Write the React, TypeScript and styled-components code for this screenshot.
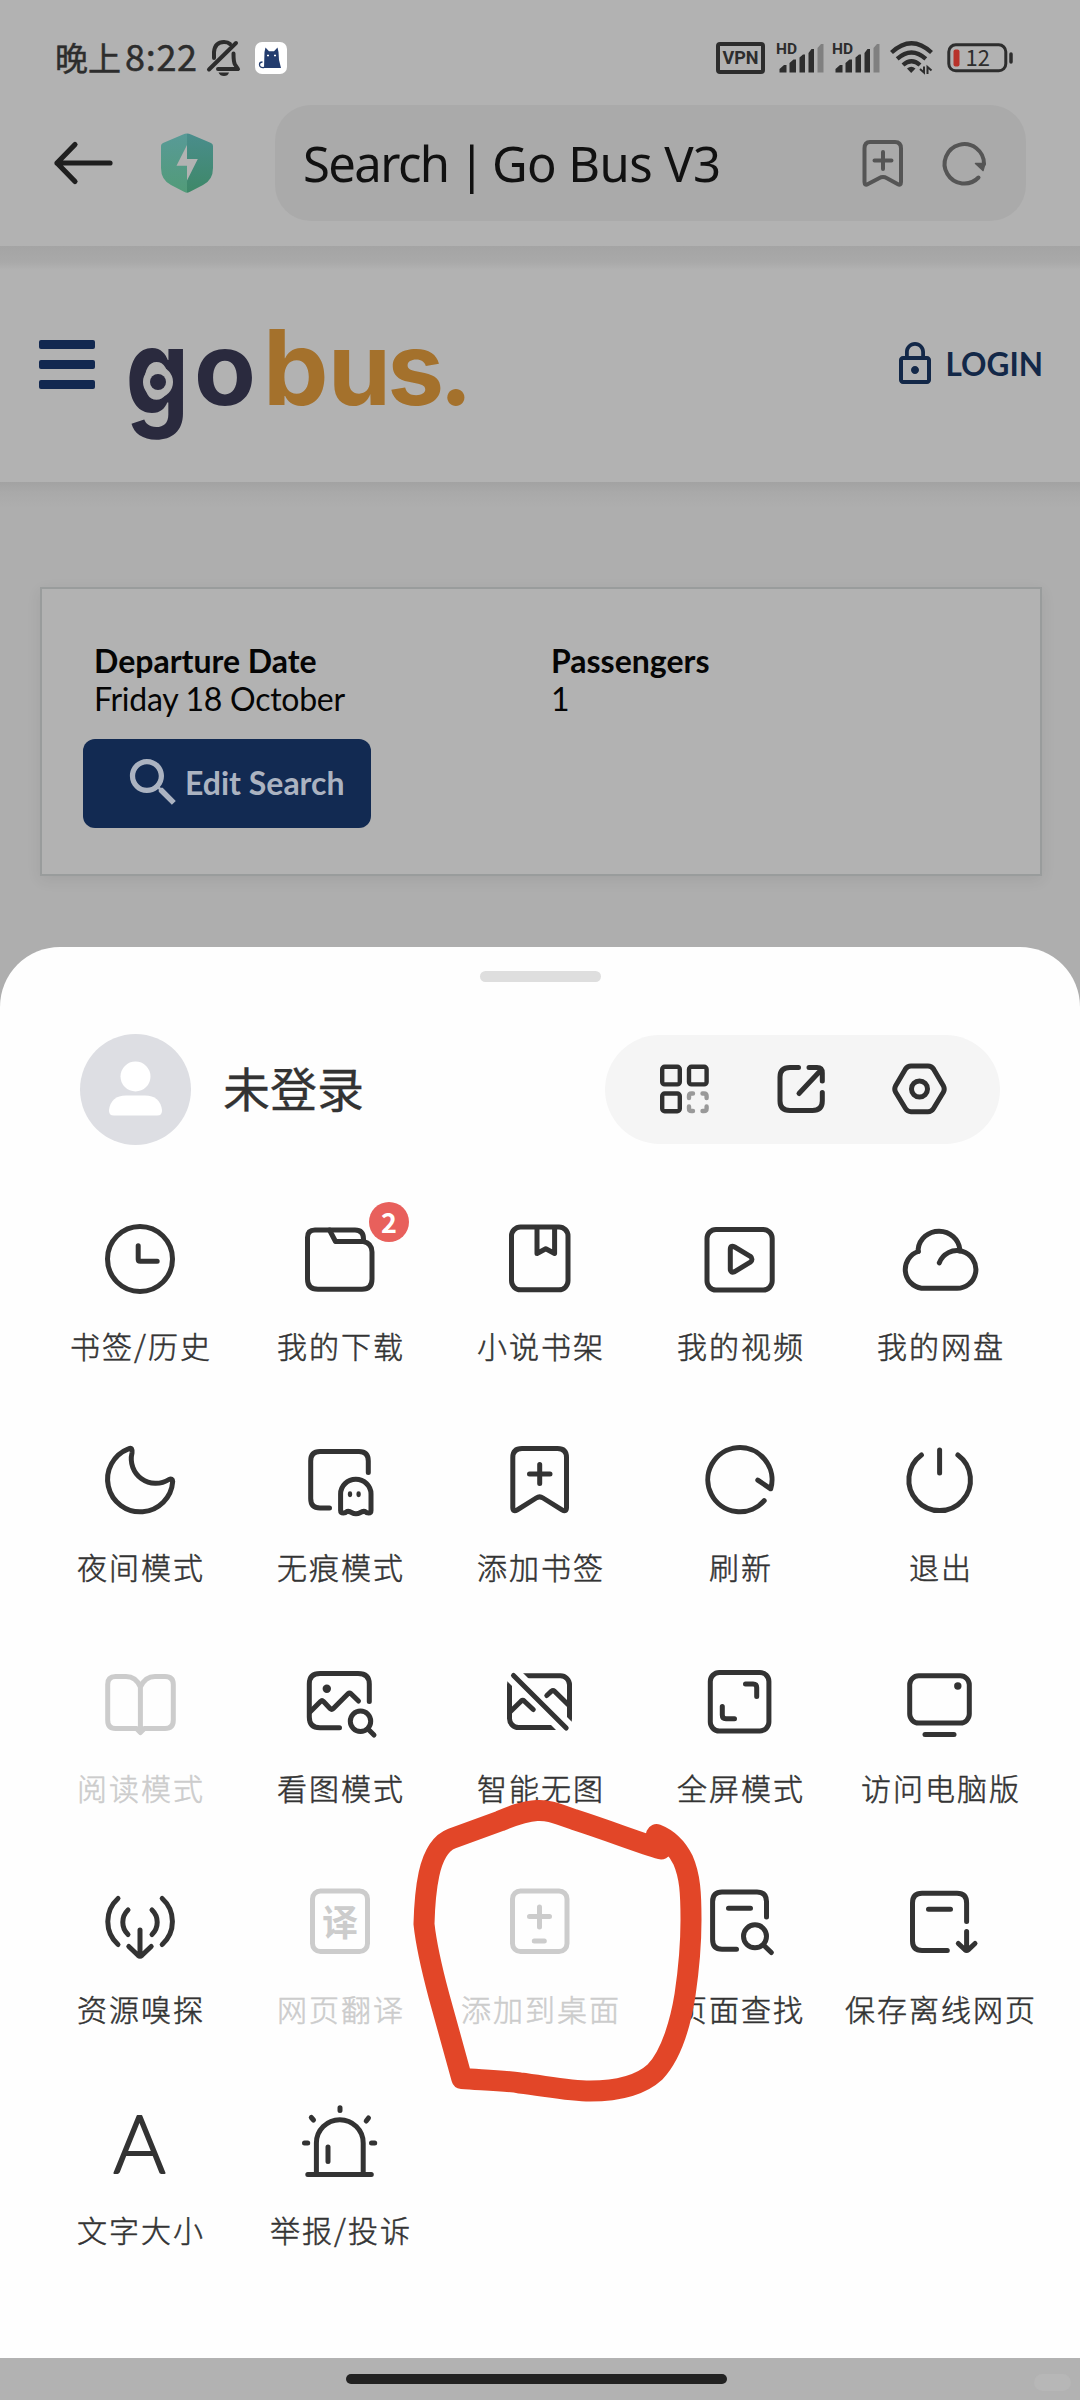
import React from "react";
import styled, { createGlobalStyle } from "styled-components";

const cjk = `"Noto Sans CJK SC", "Noto Sans", sans-serif`;
const ink = "#333333";
const muted = "#cccccc";
const dim = "#b2b2b2";

const GlobalStyle = createGlobalStyle`
  * { box-sizing: border-box; }
  body { margin: 0; background: #aeaeae; }
`;

const Screen = styled.div`
  width: 1080px;
  height: 2400px;
  display: flex;
  flex-direction: column;
  background: #aeaeae;
  font-family: ${cjk};
  overflow: hidden;
`;

/* ---------- status bar ---------- */

const StatusBar = styled.header`
  height: 105px;
  flex: none;
  display: flex;
  align-items: center;
  justify-content: space-between;
  padding: 10px 66px 0 55px;
  background: ${dim};
  color: #2d2d2d;
`;

const StatusGroup = styled.div`
  display: flex;
  align-items: center;
`;

const Clock = styled.div`
  display: flex;
  align-items: baseline;
  margin-bottom: 4px;
  font-size: 33px;
  line-height: 40px;
  font-weight: 400;
  -webkit-text-stroke: 0.5px #2d2d2d;
`;

const ClockDigits = styled.span`
  font-size: 36px;
  margin-left: 4px;
  letter-spacing: 0.7px;
`;

const Glyph = styled.svg<{ $ml?: number; $mt?: number }>`
  display: block;
  flex: none;
  overflow: visible;
  margin-left: ${(p) => p.$ml ?? 0}px;
  margin-top: ${(p) => p.$mt ?? 0}px;
`;

const VpnTag = styled.div`
  width: 49px;
  height: 32px;
  display: flex;
  align-items: center;
  justify-content: center;
  border: 4px solid #2d2d2d;
  border-radius: 4px;
  font: 700 18px/24px Roboto, sans-serif;
`;

/* ---------- browser toolbar ---------- */

const Toolbar = styled.div`
  height: 141px;
  flex: none;
  display: flex;
  align-items: flex-start;
  padding: 0 54px 0 54px;
  background: ${dim};
`;

const ToolSlot = styled.div<{ $w: number; $ml?: number }>`
  width: ${(p) => p.$w}px;
  height: 116px;
  margin-left: ${(p) => p.$ml ?? 0}px;
  display: flex;
  align-items: center;
`;

const AddressBox = styled.div`
  flex: 1;
  height: 116px;
  margin-left: 62px;
  display: flex;
  align-items: center;
  padding: 0 39px 0 28px;
  border-radius: 36px;
  background: #aaaaaa;
`;

const AddressText = styled.div`
  flex: 1;
  white-space: nowrap;
  color: #111111;
  font-family: "Noto Sans", sans-serif;
  font-size: 49px;
  line-height: 60px;
  letter-spacing: -0.6px;
`;

const TightText = styled.span<{ $ls: number }>`
  letter-spacing: ${(p) => p.$ls}px;
`;

/* ---------- web page ---------- */

const SiteHeader = styled.div`
  height: 236px;
  flex: none;
  display: flex;
  align-items: center;
  padding: 0 37px 0 39px;
  background: linear-gradient(#a4a4a4, #a9a9a9 16px, ${dim} 24px);
`;

const Burger = styled.div`
  width: 56px;
  display: flex;
  flex-direction: column;
  gap: 11px;
`;

const BurgerBar = styled.span`
  height: 9px;
  border-radius: 2px;
  background: #122850;
`;

const Login = styled.div`
  margin-left: auto;
  display: flex;
  align-items: center;
  gap: 7px;
  color: #132848;
  font: 700 31.5px/40px Lato, sans-serif;
`;

const PageBody = styled.main`
  height: 465px;
  flex: none;
  padding: 105px 38px 0 40px;
  background: linear-gradient(#a2a2a2, #a9a9a9 10px, #aeaeae 26px);
`;

const TripCard = styled.section`
  height: 289px;
  display: flex;
  flex-direction: column;
  align-items: flex-start;
  padding: 53px 0 0 41px;
  border: 2px solid #999c9c;
  background: ${dim};
  box-shadow: 0 4px 14px rgba(0, 0, 0, 0.07);
  color: #050505;
  font: 400 32px/38.4px Lato, sans-serif;
`;

const TripFacts = styled.div`
  display: grid;
  grid-template-columns: 457px 300px;
  padding-left: 11px;
`;

const FactName = styled.div`
  font-weight: 700;
`;

const FactValue = styled.div`
  letter-spacing: -0.27px;
`;

const EditButton = styled.button`
  width: 288px;
  height: 89px;
  margin: 20px 0 0 0;
  padding: 0 0 0 39px;
  display: flex;
  align-items: center;
  border: 0;
  border-radius: 12px;
  background: #122a52;
  color: #abb3c1;
  font: 700 32px/40px Lato, sans-serif;
  white-space: nowrap;
`;

/* ---------- bottom sheet ---------- */

const Sheet = styled.section`
  position: relative;
  height: 1411px;
  flex: none;
  display: flex;
  flex-direction: column;
  border-radius: 60px 60px 0 0;
  background: #fefefe;
`;

const Handle = styled.div`
  width: 121px;
  height: 11px;
  margin: 24px auto 0 480px;
  border-radius: 6px;
  background: #dedede;
`;

const ProfileRow = styled.div`
  height: 110px;
  margin-top: 52px;
  padding: 0 80px;
  display: flex;
  align-items: center;
`;

const UserName = styled.div`
  margin: 0 auto 4px 32px;
  color: ${ink};
  font-size: 47px;
  line-height: 60px;
  -webkit-text-stroke: 0.3px ${ink};
`;

const QuickPill = styled.div`
  width: 395px;
  height: 109px;
  padding: 0 54px 0 53px;
  display: flex;
  align-items: center;
  justify-content: space-between;
  border-radius: 55px;
  background: #f5f5f5;
`;

const MenuGrid = styled.div`
  margin: 67px 40px 0;
  display: grid;
  grid-template-columns: repeat(5, 200px);
  grid-auto-rows: 221px;
`;

const MenuCell = styled.div<{ $off?: boolean }>`
  position: relative;
  display: flex;
  flex-direction: column;
  align-items: center;
  color: ${(p) => (p.$off ? muted : ink)};
`;

const MenuIcon = styled.svg`
  display: block;
  width: 96px;
  height: 96px;
  flex: none;
  overflow: visible;
  fill: none;
  stroke: currentColor;
  stroke-width: 5;
  stroke-linecap: round;
  stroke-linejoin: round;
`;

const MenuLabel = styled.div`
  margin-top: 18px;
  white-space: nowrap;
  font-weight: 300;
  font-size: 30px;
  line-height: 40px;
  letter-spacing: 2px;
  margin-right: -2px;
  -webkit-text-stroke: 0.5px currentColor;
`;

const Badge = styled.span`
  position: absolute;
  left: 129px;
  top: -9px;
  width: 40px;
  height: 40px;
  border-radius: 50%;
  background: #e8605c;
  color: #ffffff;
  text-align: center;
  font: 700 27px/40px "Noto Sans CJK SC", sans-serif;
`;

const Scribble = styled.svg`
  position: absolute;
  left: 0;
  top: 0;
  pointer-events: none;
`;

const NavBar = styled.footer`
  height: 42px;
  flex: none;
  display: flex;
  align-items: flex-start;
  padding: 16px 9px 0 346px;
  background: ${dim};
`;

const NavPill = styled.div`
  width: 381px;
  height: 10px;
  border-radius: 5px;
  background: #222222;
`;

const Stamp = styled.div`
  width: 37px;
  height: 17px;
  margin-left: auto;
  border-radius: 9px;
  background: #b7b7b7;
`;

/* ---------- drawings ---------- */

const SignalIcon = ({ ml }: { ml: number }) => (
  <Glyph width="46" height="32" viewBox="0 0 46 32" $ml={ml} fill="#2d2d2d">
    <text x="-1" y="12" fontFamily="Roboto, sans-serif" fontWeight="700" fontSize="15.5">HD</text>
    <path d="M2.5 30.5V27l4.5-4h2.5v7.5zM12.500 30.5V21l4-3.500h2.500v13zM22.500 30.500V15.500l3.500-3h2v18zM31.500 30.500V11l3-4h2.500v23.500z" />
    <path fill="#808080" d="M40.500 30.500V6l3.500-4h2.500v28.500z" />
  </Glyph>
);

const icons: Record<string, React.ReactNode> = {
  history: (
    <>
      <circle cx="0" cy="0" r="32.500" />
      <path d="M-1.800-13.200V.3Q-1.800 2.300.2 2.300H17.200" />
    </>
  ),
  download: (
    <>
      <path d="M-25-29H15Q23.500-29 23.500-20V-17.500Q32-15.500 32-7V20Q32 30.300 22 30.300H-22Q-32.500 30.300-32.500 20V-21.500Q-32.500-29-25-29Z" />
      <path d="M23.500-17.500H-4.500L-10.500-29" />
    </>
  ),
  novel: (
    <>
      <rect x="-28.500" y="-32" width="56.500" height="62.800" rx="9" />
      <path d="M-3-31V-5.500L5.800-10.300L14.600-5.500V-31" />
    </>
  ),
  video: (
    <>
      <rect x="-33" y="-29.500" width="65.200" height="60.500" rx="9" />
      <path d="M-9.700-9.500Q-9.700-14.500-5.300-12L10.300-2.700Q13.600 0 10.300 3.200L-5.300 12.600Q-9.700 14.500-9.700 10Z" />
    </>
  ),
  cloud: (
    <g transform="translate(-1 0)">
      <path d="M.3 3.800A18.900 18.900 0 1 1 16.500 29.300H-17.500A19 19 0 0 1-20.800-7.500" />
      <path d="M-20.800-7.500V-10A20.900 20 0 0 1 20.800-9.500V-8" />
    </g>
  ),
  night: (
    <path d="M-11.500-31.200A32.600 32.600 0 1 0 32.700 1.500C32.700-.8 31.300-1.400 29-.5A24.500 24.500 0 0 1-8-27C-7.700-31-8.200-32.600-11.500-31.200Z" />
  ),
  incognito: (
    <>
      <path d="M28.300-7.500V-19Q28.300-28.500 19-28.500H-20Q-29.300-28.500-29.300-19V18.500Q-29.300 28-20 28H-10.500" />
      <path d="M.6 14A15.200 14.700 0 0 1 31 14V30.500Q31 33 28.500 33Q26.500 33 25 31.500Q22.500 31 20.500 32.500Q16 35 11.500 32.500Q9.500 31 7 31.500Q5.500 33 3.500 33Q.6 33 .6 30.500Z" />
      <path strokeWidth="4.300" d="M10 13.500V15M18.600 13.500V15" />
    </>
  ),
  addMark: (
    <>
      <path d="M-18-31.500H17.500Q26.500-31.500 26.500-22.500V27.500Q26.500 32.500 22 29.800L3 18Q-.4 15.800-3.800 18L-22.700 29.800Q-27.200 32.500-27.200 27.500V-22.500Q-27.200-31.500-18-31.500Z" />
      <path d="M-10.500-6H10M-.3-15.500V3.500" />
    </>
  ),
  refresh: <path d="M24.200 20.700A32.100 32.100 0 1 1 30.700 8.800L17.800.2" />,
  power: (
    <>
      <path d="M-18.600-25A30.800 30.800 0 1 0 17.900-25" />
      <path d="M-.4-30V-7" />
    </>
  ),
  read: (
    <path d="M.4-14C-3-22-8-24.500-14-24.500H-24.500Q-32.300-24.500-32.300-16.500V19Q-32.300 27.500-24.500 27.500H-3.500L.4 31.500L4.300 27.500H25Q33.300 27.500 33.300 19V-16.500Q33.300-24.500 25-24.500H15C9-24.500 4-22 .4-14ZV30" />
  ),
  imageSearch: (
    <>
      <path d="M29.300 .5V-17Q29.300-27.500 18-27.500H-20Q-30.700-27.500-30.700-17V16Q-30.700 26.800-20 26.800H-.5" />
      <path d="M-29.500 10.500L-19.500.5Q-18-1-16.500.5L-9.700 7.700Q-8.300 9-6.900 7.700L8-7.300Q9.500-8.500 11-7.300L18.500 0" />
      <circle cx="-13.200" cy="-12.300" r="4.200" fill="currentColor" stroke="none" />
      <circle cx="20.500" cy="20.300" r="10.200" />
      <path d="M28 28L34 34" />
    </>
  ),
  noImage: (
    <>
      <mask id="slashGap" maskUnits="userSpaceOnUse" x="-48" y="-48" width="96" height="96">
        <rect x="-48" y="-48" width="96" height="96" fill="#fff" stroke="none" />
        <path d="M-45-44L45 46" stroke="#000" strokeWidth="17" />
      </mask>
      <rect x="-30.500" y="-25.200" width="60" height="51.700" rx="9" mask="url(#slashGap)" />
      <path d="M-29.500 10.500L-19 .2Q-17.300-1.300-15.600.2L-6.800 8.500" />
      <path d="M6.800-5.500L11.500-9.800Q13-11 14.500-9.800L28 3.500" />
      <path d="M-26.500-25.500L26.200 27" />
    </>
  ),
  full: (
    <>
      <rect x="-29.700" y="-28.500" width="58.600" height="58.500" rx="9" />
      <path d="M5.500-17H13Q16.700-17 16.700-13.500V-4.500M-17.700 5.500V14Q-17.700 17.700-14 17.700H-5.500" />
    </>
  ),
  desktop: (
    <>
      <rect x="-30.300" y="-25.200" width="59.600" height="47.300" rx="9" />
      <path d="M-15 33.600H14" />
      <circle cx="17.800" cy="-15" r="3.700" fill="currentColor" stroke="none" />
    </>
  ),
  sniff: (
    <>
      <path d="M-22-23.500A31 31 0 0 0-22 22.500M22.200-23.500A31 31 0 0 1 22.200 22.500" />
      <path d="M-12-12A17 17 0 0 0-12 12.500M12-12A17 17 0 0 1 12 12.500" />
      <path d="M0 8V33M-11.200 24.500L-2 33.300Q0 35 2 33.300L11.200 24.500" />
    </>
  ),
  translate: (
    <>
      <rect x="-27.500" y="-31" width="55" height="60.500" rx="8" />
      <text x="0" y="13.500" textAnchor="middle" fill="currentColor" stroke="none" fontFamily={cjk} fontWeight="700" fontSize="36">译</text>
    </>
  ),
  addDesk: (
    <>
      <rect x="-27.500" y="-31" width="54.500" height="60.500" rx="8" />
      <path d="M-10.500-5.500H9.500M-.5-15V5M-5.700 19H4.300" />
    </>
  ),
  find: (
    <>
      <path d="M26.500-5V-20.500Q26.500-30 17-30H-18Q-27.400-30-27.400-20.500V17.500Q-27.400 27.300-18 27.300H-3.500" />
      <path d="M-11.500-13.700H10.500M23.500 23L31.300 30.500" />
      <circle cx="15" cy="14.300" r="11.500" />
    </>
  ),
  save: (
    <>
      <path d="M26.600-.5V-19Q26.600-28.700 17-28.700H-18Q-27.500-28.700-27.500-19V19Q-27.500 28.500-18 28.500H7.300" />
      <path d="M-11.500-12.700H10.500M26.600 9.500V28M18.300 21.500L25 27.800Q26.600 29.200 28.200 27.800L35 21.500" />
    </>
  ),
  fontSize: (
    <text x="-.5" y="30" textAnchor="middle" fill="currentColor" strokeWidth="1.800" fontFamily="Lato, sans-serif" fontWeight="300" fontSize="80">A</text>
  ),
  report: (
    <>
      <path d="M-23.600 31V0A23.400 23.200 0 0 1 23.200 0V31" />
      <path d="M-32.200 31.400H31.300M-12 4V18.500" />
      <path d="M0-35.300V-32.500M-35.500 0H-32.300M31.500 0H34.700M-28.700-25.500L-26.500-23M28.500-25L26.200-22" />
    </>
  ),
};

type Item = { icon: string; label: string; off?: boolean; badge?: string };

const items: Item[] = [
  { icon: "history", label: "书签/历史" },
  { icon: "download", label: "我的下载", badge: "2" },
  { icon: "novel", label: "小说书架" },
  { icon: "video", label: "我的视频" },
  { icon: "cloud", label: "我的网盘" },
  { icon: "night", label: "夜间模式" },
  { icon: "incognito", label: "无痕模式" },
  { icon: "addMark", label: "添加书签" },
  { icon: "refresh", label: "刷新" },
  { icon: "power", label: "退出" },
  { icon: "read", label: "阅读模式", off: true },
  { icon: "imageSearch", label: "看图模式" },
  { icon: "noImage", label: "智能无图" },
  { icon: "full", label: "全屏模式" },
  { icon: "desktop", label: "访问电脑版" },
  { icon: "sniff", label: "资源嗅探" },
  { icon: "translate", label: "网页翻译", off: true },
  { icon: "addDesk", label: "添加到桌面", off: true },
  { icon: "find", label: "页面查找" },
  { icon: "save", label: "保存离线网页" },
  { icon: "fontSize", label: "文字大小" },
  { icon: "report", label: "举报/投诉" },
];

export default function App() {
  return (
    <>
      <GlobalStyle />
      <Screen>
        <StatusBar>
          <StatusGroup>
            <Clock>
              晚上<ClockDigits>8:22</ClockDigits>
            </Clock>
            <Glyph width="34" height="36" viewBox="0 0 34 36" $ml={9} fill="none" stroke="#2d2d2d" strokeWidth="4" strokeLinecap="round" strokeLinejoin="round">
              <path d="M7 18V12Q8 2 17 2Q21 2 23 4M26.500 13.500Q26.500 22 28 24.500L31 29H11" />
              <path d="M2 29.500L29 3" />
              <path d="M11.500 32.500H22Q21 36 17 36T11.500 32.500Z" fill="#2d2d2d" stroke="none" />
            </Glyph>
            <Glyph width="32" height="32" viewBox="0 0 32 32" $ml={14}>
              <rect width="32" height="32" rx="7" fill="#fff" />
              <path fill="#233c6e" d="M9.500 10L10.500 5.500L14 9.200H19L22.500 5.500L23.500 10L24 18L26 26H9Z" />
              <path d="M9 25.500Q4.500 26 4.500 22.500Q4.500 20 7.500 20" fill="none" stroke="#233c6e" strokeWidth="1.300" />
              <path d="M12 13.500h2M19 13.500h2" stroke="#fff" strokeWidth="1.500" />
            </Glyph>
          </StatusGroup>
          <StatusGroup>
            <VpnTag>VPN</VpnTag>
            <SignalIcon ml={12} />
            <SignalIcon ml={10} />
            <Glyph width="43" height="34" viewBox="0 0 43 34" $ml={11} fill="none" stroke="#2d2d2d" strokeWidth="4.300" strokeLinecap="butt">
              <path d="M1.500 11.500Q21.500-7 41.500 11.500M7.200 17.800Q21.500 5 35.800 17.800M13 24Q21.500 16.500 30 24" />
              <path d="M17 27.500Q21.200 24 25.500 27.500L21.200 32Z" fill="#2d2d2d" stroke="none" />
              <path strokeWidth="2" d="M30 28L34 31.500V25.500M41.500 29.500L37.500 26V33" />
            </Glyph>
            <Glyph width="67" height="30" viewBox="0 0 67 30" $ml={14}>
              <rect x="1.800" y="1.800" width="57" height="26" rx="7" fill="none" stroke="#2d2d2d" strokeWidth="3" />
              <rect x="6.500" y="6.500" width="6" height="17" rx="2" fill="#b8322a" />
              <path d="M64 11v8" stroke="#2d2d2d" strokeWidth="3.500" strokeLinecap="round" />
              <text x="18.500" y="23" fontFamily={cjk} fontSize="22" fill="#2d2d2d">12</text>
            </Glyph>
          </StatusGroup>
        </StatusBar>

        <Toolbar>
          <ToolSlot $w={59}>
            <Glyph width="59" height="42" viewBox="0 0 59 42" fill="none" stroke="#1f1f1f" strokeWidth="5.200" strokeLinecap="round" strokeLinejoin="round">
              <path d="M21 2.500L3 21L21 39.500M3 21H56" />
            </Glyph>
          </ToolSlot>
          <ToolSlot $w={52} $ml={48}>
            <Glyph width="52" height="60" viewBox="0 0 52 60">
              <defs>
                <linearGradient id="shieldL" x1="0" y1="0" x2="0" y2="1">
                  <stop offset="0" stopColor="#589a97" />
                  <stop offset="1" stopColor="#529b78" />
                </linearGradient>
                <linearGradient id="shieldR" x1="0" y1="0" x2="0" y2="1">
                  <stop offset="0" stopColor="#4a8d8c" />
                  <stop offset="1" stopColor="#3e8868" />
                </linearGradient>
              </defs>
              <path fill="url(#shieldL)" d="M26 .5Q24 .5 22 1.500L2 10Q0 11 0 13V35Q0 47 10 52L23 58.800Q25 59.800 26 59.800Z" />
              <path fill="url(#shieldR)" d="M26 .5Q28 .5 30 1.500L50 10Q52 11 52 13V35Q52 47 42 52L29 58.800Q27 59.800 26 59.800Z" />
              <path fill={dim} d="M26 12L15.500 32.800H26V47.500L36.800 26H26Z" />
            </Glyph>
          </ToolSlot>
          <AddressBox>
            <AddressText>
              <TightText $ls={-1.6}>Search</TightText>
              <TightText $ls={-3}> | </TightText>
              Go Bus V3
            </AddressText>
            <Glyph width="42" height="48" viewBox="0 0 42 48" fill="none" stroke="#555555" strokeWidth="4" strokeLinecap="round" strokeLinejoin="round">
              <path d="M8 3H33Q39 3 39 9.500V43Q39 47 35.500 45L25 39.200Q21 37 17 39.200L6 45Q2.500 47 2.500 43V9.500Q2.500 3 8 3Z" />
              <path d="M12.500 21.500H29.500M21 13V30" />
            </Glyph>
            <Glyph width="44" height="44" viewBox="0 0 44 44" $ml={39} fill="none" stroke="#555555" strokeWidth="4" strokeLinecap="round" strokeLinejoin="round">
              <path d="M35.500 36.500A19.700 19.700 0 1 1 41 23" />
              <path d="M32.500 22.500H42L40 29.500Z" fill="#555555" strokeWidth="1.500" />
            </Glyph>
          </AddressBox>
        </Toolbar>

        <SiteHeader>
          <Burger>
            <BurgerBar />
            <BurgerBar />
            <BurgerBar />
          </Burger>
          <Glyph width="340" height="200" viewBox="128 264 340 200" $ml={33} fontFamily="Inter, sans-serif" fontWeight="700" fontSize="101">
            <text transform="translate(0 349.500) scale(1 1.180)" y="55" x="125.500" fill="#2a2a3e">g</text>
            <ellipse cx="158" cy="382" rx="15" ry="15.500" fill={dim} />
            <circle cx="158" cy="382" r="8" fill="#2a2a3e" />
            <text y="404.500" x="194" fill="#2a2a3e">o</text>
            <text y="404.500" x="263" fontSize="104" fill="#a4712c">b</text>
            <text y="404.500" x="328 387.500 439" fill="#a4712c">us.</text>
          </Glyph>
          <Login>
            <Glyph width="48" height="48" viewBox="0 0 24 24" fill="#132848">
              <path d="M12 17c1.100 0 2-.9 2-2s-.9-2-2-2-2 .9-2 2 .9 2 2 2zm6-9h-1V6c0-2.760-2.240-5-5-5S7 3.240 7 6v2H6c-1.100 0-2 .9-2 2v10c0 1.100.9 2 2 2h12c1.100 0 2-.9 2-2V10c0-1.100-.9-2-2-2zM8.900 6c0-1.710 1.390-3.100 3.100-3.100s3.100 1.390 3.100 3.100v2H8.900V6zM18 20H6V10h12v10z" />
            </Glyph>
            LOGIN
          </Login>
        </SiteHeader>

        <PageBody>
          <TripCard>
            <TripFacts>
              <FactName>Departure Date</FactName>
              <FactName>Passengers</FactName>
              <FactValue>Friday 18 October</FactValue>
              <FactValue>1</FactValue>
            </TripFacts>
            <EditButton>
              <Glyph width="63" height="63" viewBox="0 0 24 24" fill="#abb3c1" $mt={-2}>
                <path d="M15.500 14h-.79l-.28-.27C15.410 12.590 16 11.110 16 9.500 16 5.910 13.090 3 9.500 3S3 5.910 3 9.500 5.910 16 9.500 16c1.610 0 3.090-.59 4.230-1.570l.27.28v.79l5 4.990L20.490 19l-4.990-5zm-6 0C7.010 14 5 11.990 5 9.500S7.010 5 9.500 5 14 7.010 14 9.500 11.990 14 9.500 14z" />
              </Glyph>
              Edit Search
            </EditButton>
          </TripCard>
        </PageBody>

        <Sheet>
          <Handle />
          <ProfileRow>
            <Glyph width="111" height="111" viewBox="0 0 111 111">
              <circle cx="55.500" cy="55.500" r="55.500" fill="#dddee3" />
              <circle cx="55.500" cy="42.500" r="15" fill="#fff" />
              <path d="M29 76Q31 61.500 46 61.500H65Q80 61.500 82 76Q82.500 81.500 77 81.500H34Q28.500 81.500 29 76Z" fill="#fff" />
            </Glyph>
            <UserName>未登录</UserName>
            <QuickPill>
              <Glyph width="54" height="54" viewBox="-27 -27 54 54" fill="none" stroke="#303030" strokeWidth="4.400" strokeLinecap="round" strokeLinejoin="round">
                <rect x="-22.800" y="-22.300" width="17.600" height="17.700" rx="2.500" />
                <rect x="4" y="-22.300" width="17.600" height="17.700" rx="2.500" />
                <rect x="-22.800" y="4.500" width="17.600" height="17.700" rx="2.500" />
                <path stroke="#999" d="M4 9V7Q4 4.500 6.500 4.500H8M17.500 4.500H19Q21.600 4.500 21.600 7V9M21.600 17.500V19.500Q21.600 22 19 22H17.500M8 22H6.500Q4 22 4 19.500V17.500" />
              </Glyph>
              <Glyph width="54" height="54" viewBox="-27 -27 54 54" fill="none" stroke="#303030" strokeWidth="5" strokeLinecap="round" strokeLinejoin="round">
                <path d="M-3.500-21.500H-12Q-22-21.500-22-12V12Q-22 21.500-12 21.500H10.500Q20.300 21.500 20.300 12V3.500" />
                <path d="M7-21.500H15Q20.300-21.500 20.300-16V-8M-3 4.500L19-19" />
              </Glyph>
              <Glyph width="54" height="54" viewBox="-27 -27 54 54" fill="none" stroke="#303030" strokeWidth="5" strokeLinejoin="round">
                <path d="M-8-23H9Q12.500-23 14.500-20L24.500-3Q26 0 24.500 3L14.500 19.500Q12.500 22.700 9 22.700H-8Q-11.500 22.700-13.500 19.500L-23.500 3Q-25 0-23.500-3L-13.500-20Q-11.500-23-8-23Z" />
                <circle cx=".5" cy="0" r="8" />
              </Glyph>
            </QuickPill>
          </ProfileRow>

          <MenuGrid>
            {items.map((it) => (
              <MenuCell key={it.label} $off={it.off}>
                <MenuIcon viewBox="-48 -48 96 96">{icons[it.icon]}</MenuIcon>
                <MenuLabel>{it.label}</MenuLabel>
                {it.badge && <Badge>{it.badge}</Badge>}
              </MenuCell>
            ))}
          </MenuGrid>

          <Scribble width="1080" height="1411" viewBox="0 947 1080 1411" fill="none" stroke="#e24628" strokeWidth="21" strokeLinecap="round" strokeLinejoin="round">
            <path d="M661 1849C640 1843 610 1831 574 1819.500C552 1811.500 547 1810 537 1810.500C524 1811 512 1816 500 1821L452 1838.500C440 1843 433 1856 429 1874C426 1888 424.500 1905 424 1924C426 1943 431 1966 439 1996C446 2022 455 2053 461.800 2078.500C480 2080 500 2080 520 2083C548 2086.500 570 2091 590 2091C622 2091 642 2084 655 2072C672 2054 681 2020 685 1995C689 1968 691 1945 691 1920C691 1893 690 1876 683 1860C677 1848 668 1839 656.500 1834.500" />
          </Scribble>
        </Sheet>

        <NavBar>
          <NavPill />
          <Stamp />
        </NavBar>
      </Screen>
    </>
  );
}
